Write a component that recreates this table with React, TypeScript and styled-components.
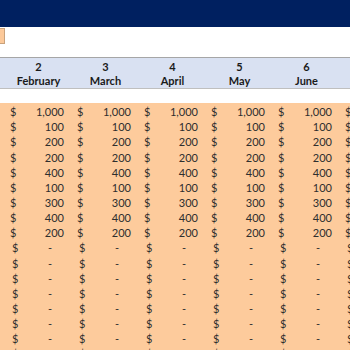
import React from 'react';
import styled, { createGlobalStyle } from 'styled-components';

const GlobalStyle = createGlobalStyle`
  body {
    margin: 0;
    font-family: Lato, 'Open Sans', sans-serif;
  }
`;

const Page = styled.div`
  width: 350px;
  height: 350px;
  overflow: hidden;
  background: #fff;
`;

const TitleBar = styled.div`
  height: 27px;
  background: #002060;
`;

const InputRow = styled.div`
  height: 30px;
  display: flex;
  align-items: flex-start;
  padding-top: 1px;
  box-sizing: border-box;
`;

const InputCell = styled.div`
  width: 4px;
  height: 14px;
  background: #fcc99a;
  border: 1px solid #c9a27c;
  border-left: none;
`;

const HeaderBand = styled.div`
  height: 32px;
  box-sizing: border-box;
  background: #d9e1f2;
  border-top: 1px solid #a6a6a6;
  border-bottom: 1px solid #bfbfbf;
  display: grid;
  grid-template-columns: 5px repeat(6, 67px);
  color: #1a1a1a;
  font-weight: 700;
  font-size: 11px;
`;

const HeaderCell = styled.div`
  display: flex;
  flex-direction: column;
  align-items: center;
  justify-content: flex-end;
  line-height: 14px;
  white-space: nowrap;
`;

const Gap = styled.div`
  height: 14px;
`;

const Body = styled.div`
  background: #fdcb9c;
  color: #2e2e2e;
  font-size: 11px;
`;

const Row = styled.div`
  height: 15.15px;
  display: grid;
  grid-template-columns: 4px repeat(6, 67px);
  align-items: end;
`;

const Cell = styled.div<{ $empty: boolean }>`
  display: flex;
  justify-content: space-between;
  white-space: nowrap;
  line-height: 13px;
  padding-left: ${({ $empty }) => ($empty ? '8px' : '6px')};
  padding-right: ${({ $empty }) => ($empty ? '19px' : '7px')};
`;

const months = ['February', 'March', 'April', 'May', 'June', 'July'];
const values = [1000, 100, 200, 200, 400, 100, 300, 400, 200, 0, 0, 0, 0, 0, 0, 0, 0];

const fmt = (v: number) => (v === 0 ? '-' : v.toLocaleString('en-US'));

export default function App() {
  return (
    <Page>
      <GlobalStyle />
      <TitleBar />
      <InputRow>
        <InputCell />
      </InputRow>
      <HeaderBand>
        <div />
        {months.map((m, i) => (
          <HeaderCell key={m}>
            <span>{i + 2}</span>
            <span>{m}</span>
          </HeaderCell>
        ))}
      </HeaderBand>
      <Gap />
      <Body>
        {values.map((v, r) => (
          <Row key={r}>
            <div />
            {months.map(m => (
              <Cell key={m} $empty={v === 0}>
                <span>$</span>
                <span>{fmt(v)}</span>
              </Cell>
            ))}
          </Row>
        ))}
      </Body>
    </Page>
  );
}
